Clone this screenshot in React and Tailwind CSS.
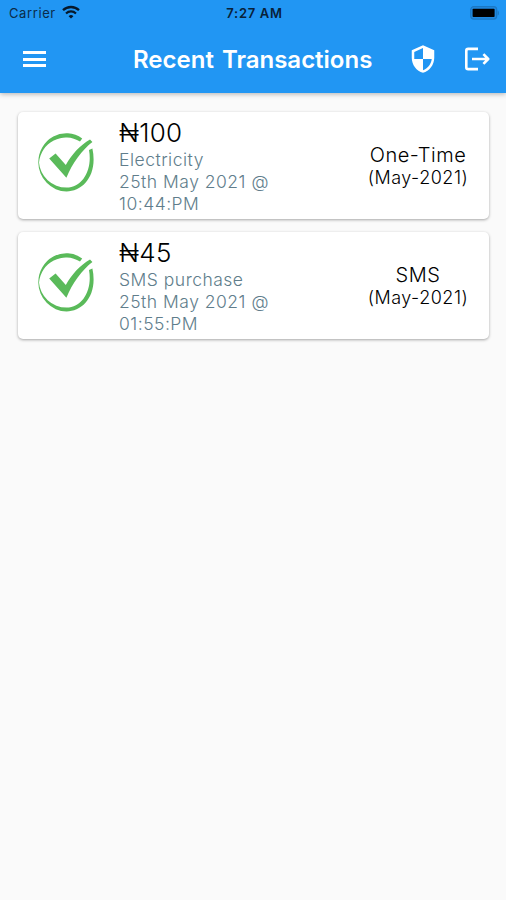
import { MdSecurity } from "react-icons/md";

const transactions = [
  {
    id: 1,
    amount: "₦100",
    description: "Electricity",
    date: "25th May 2021 @",
    time: "10:44:PM",
    type: "One-Time",
    period: "(May-2021)",
  },
  {
    id: 2,
    amount: "₦45",
    description: "SMS purchase",
    date: "25th May 2021 @",
    time: "01:55:PM",
    type: "SMS",
    period: "(May-2021)",
  },
];

function WifiIcon() {
  return (
    <svg className="-mt-0.5 ml-1.5 h-[14px] w-[18px]" viewBox="0 0 18 14" fill="none" stroke="#06182a">
      <path d="M1 5.2a11.6 11.6 0 0 1 16 0" strokeWidth="2.3" />
      <path d="M4 8.4a7.2 7.2 0 0 1 10 0" strokeWidth="2.1" />
      <path d="M9 13.6 6.6 11.2a3.5 3.5 0 0 1 4.8 0z" fill="#06182a" stroke="none" />
    </svg>
  );
}

function BatteryIcon() {
  return (
    <svg className="h-[14px] w-[30px]" viewBox="0 0 30 14">
      <rect x="0.7" y="0.7" width="26" height="12.4" rx="3" fill="#2089e0" stroke="#1b78c4" strokeWidth="1.2" />
      <rect x="2.6" y="2.8" width="22" height="8.2" rx="0.8" fill="#000" />
      <path d="M27.6 4.4c1.8.6 1.8 4.6 0 5.2z" fill="#1b78c4" />
    </svg>
  );
}

function LogoutIcon() {
  return (
    <svg className="h-6 w-[26px]" viewBox="0 0 26 24" fill="none" stroke="#fff" strokeWidth="2.6" strokeLinejoin="round">
      <path d="M14 1.9H4.2A1.9 1.9 0 0 0 2.3 3.8v16.4a1.9 1.9 0 0 0 1.9 1.9H14" />
      <path d="M8 12h15.8M19.4 7.2l4.8 4.8-4.8 4.8" />
    </svg>
  );
}

function SuccessIcon() {
  return (
    <svg className="h-[60px] w-[58px] shrink-0" viewBox="0 0 58 60" fill="#5aba5a">
      <path d="M44.2 6.4A28 29.2 0 0 0 0.3 30.4A28.4 29.4 0 0 0 28.5 59.4C45 59.4 60 43 54.4 16.6L51 18C54.6 37.6 44.6 55.6 28.5 55.6A27.8 27 0 0 1 1 30.4A27 27.3 0 0 1 42 9.6Z" />
      <path d="M11.2 26.4 17.6 21.4 27.8 33C34 22.4 42 13.3 52 7.6L54.4 9.9C44.6 17.4 34.2 31 28.4 45.8Z" />
    </svg>
  );
}

function StatusBar() {
  return (
    <div className="grid h-[26px] grid-cols-3 items-center pl-[9px] pr-1.5 text-[13px] leading-none text-[#0b2c49]">
      <div className="flex items-center">
        <span className="tracking-[0.6px]">Carrier</span>
        <WifiIcon />
      </div>
      <span className="text-center font-semibold tracking-[0.7px] text-[#08213a]">7:27 AM</span>
      <div className="flex justify-end">
        <BatteryIcon />
      </div>
    </div>
  );
}

function Header() {
  return (
    <header className="h-[93px] shrink-0 bg-[#2196f3] shadow-[0_1px_5px_rgba(0,0,0,0.3)]">
      <StatusBar />
      <div className="flex h-[66px] items-center pl-[23px] pr-4 text-white">
        <button className="flex w-[23px] flex-col gap-[3.5px]" aria-label="Menu">
          <span className="h-[3px] w-full bg-white" />
          <span className="h-[3px] w-full bg-white" />
          <span className="h-[3px] w-full bg-white" />
        </button>
        <h1 className="ml-[87px] mt-0.5 w-[240px] whitespace-nowrap text-[24px] font-semibold leading-none [word-spacing:2px]">
          Recent Transactions
        </h1>
        <button className="ml-auto" aria-label="Security">
          <MdSecurity className="size-[30px]" />
        </button>
        <button className="ml-[26px]" aria-label="Log out">
          <LogoutIcon />
        </button>
      </div>
    </header>
  );
}

function TransactionCard({ transaction }) {
  return (
    <div className="flex h-[107px] rounded-[5px] bg-white px-5 shadow-[0_1px_3px_rgba(0,0,0,0.34)]">
      <div className="pt-5">
        <SuccessIcon />
      </div>
      <div className="ml-[23px] flex-1 pt-[5px] text-[17.5px] font-[350] leading-[22px] tracking-[0.5px] text-[#607d8b]">
        <p className="text-[26px] font-light leading-8 tracking-[0.2px] text-black">{transaction.amount}</p>
        <p>{transaction.description}</p>
        <p>{transaction.date}</p>
        <p>{transaction.time}</p>
      </div>
      <div className="w-[102px] whitespace-nowrap pt-[31px] text-center font-light text-black">
        <p className="text-[20px] leading-6 tracking-[0.5px]">{transaction.type}</p>
        <p className="text-[18px] leading-[21px] tracking-[0.5px]">{transaction.period}</p>
      </div>
    </div>
  );
}

export default function App() {
  return (
    <div className="flex h-[900px] w-[506px] flex-col overflow-hidden bg-[#fafafa] font-['Inter','Liberation_Sans',sans-serif]">
      <Header />
      <main className="flex flex-col gap-[13px] pl-[18px] pr-[17px] pt-[19px]">
        {transactions.map((transaction) => (
          <TransactionCard key={transaction.id} transaction={transaction} />
        ))}
      </main>
    </div>
  );
}
